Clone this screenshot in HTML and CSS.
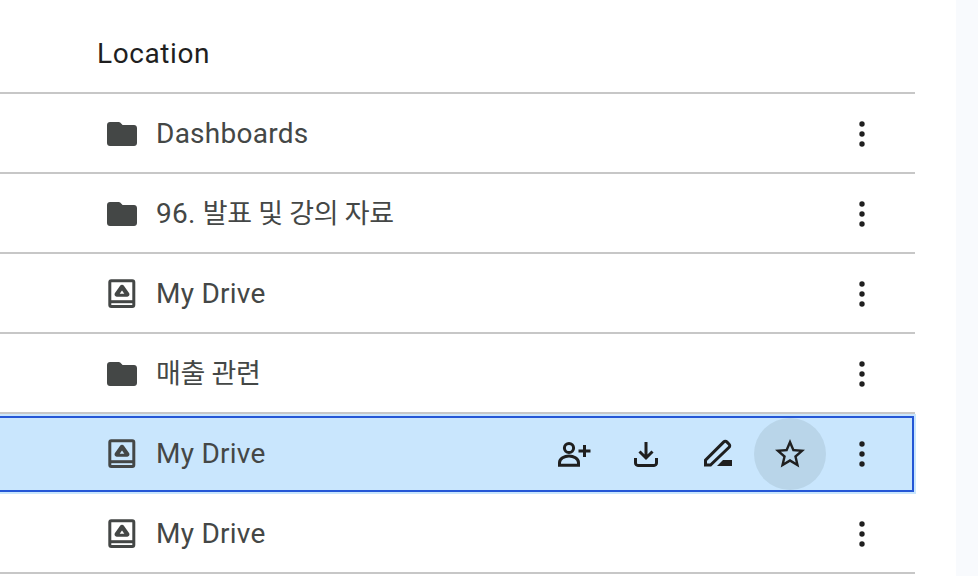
FILE: index.html
```html
<!DOCTYPE html>
<html lang="en">
  <head>
    <meta charset="UTF-8" />
    <title>Drive list</title>
    <link rel="stylesheet" href="styles.css">
  </head>
  <body>
    <svg class="defs" width="0" height="0">
      <symbol id="folder" viewBox="0 0 36 36">
        <path d="M6 6h8.700c.6 0 1.100.2 1.500.6L18.600 9H30c1.700 0 3 1.300 3 3v15c0 1.700-1.300 3-3 3H6c-1.700 0-3-1.300-3-3V9c0-1.700 1.300-3 3-3z" />
      </symbol>
      <symbol id="drive" viewBox="0 0 36 36">
        <rect class="line" x="5.800" y="4.800" width="24" height="25.700" rx="1.500" />
        <path class="line" d="M6 25.700h24" />
        <path d="M18 8.800c.8 0 1.500.4 1.900 1l5.300 7.500c.8 1.500-.2 3.400-1.900 3.400H12.700c-1.700 0-2.700-1.900-1.900-3.400l5.300-7.500c.4-.6 1.100-1 1.900-1z" />
        <path class="cut" d="M18 14.500l-2.300 3.300h4.600z" />
      </symbol>
      <symbol id="dots" viewBox="0 0 36 36">
        <circle cx="18" cy="8" r="2.700" />
        <circle cx="18" cy="18" r="2.700" />
        <circle cx="18" cy="28" r="2.700" />
      </symbol>
    </svg>

    <main class="list">
      <header class="list-head">Location</header>

      <div class="row">
        <svg class="item-icon"><use href="#folder" /></svg>
        <span class="name">Dashboards</span>
        <div class="actions">
          <button class="act"><svg><use href="#dots" /></svg></button>
        </div>
      </div>

      <div class="row">
        <svg class="item-icon"><use href="#folder" /></svg>
        <span class="name">96. <span class="ko">발표 및 강의 자료</span></span>
        <div class="actions">
          <button class="act"><svg><use href="#dots" /></svg></button>
        </div>
      </div>

      <div class="row">
        <svg class="item-icon"><use href="#drive" /></svg>
        <span class="name">My Drive</span>
        <div class="actions">
          <button class="act"><svg><use href="#dots" /></svg></button>
        </div>
      </div>

      <div class="row">
        <svg class="item-icon"><use href="#folder" /></svg>
        <span class="name"><span class="ko">매출 관련</span></span>
        <div class="actions">
          <button class="act"><svg><use href="#dots" /></svg></button>
        </div>
      </div>

      <div class="row selected">
        <svg class="item-icon"><use href="#drive" /></svg>
        <span class="name">My Drive</span>
        <div class="actions">
          <button class="act">
            <svg viewBox="0 0 36 36" class="stroked">
              <circle cx="13" cy="12" r="4.600" />
              <path d="M3.500 29.300v-2.600c0-4 5-6.700 9.500-6.700s9.500 2.700 9.500 6.700v2.600z" />
              <path d="M22.500 15h12M28.500 9v12" />
            </svg>
          </button>
          <button class="act">
            <svg viewBox="0 0 36 36" class="stroked">
              <path d="M18 6v16M11.500 15.500L18 22l6.500-6.500" />
              <path d="M7.500 22v5a2.400 2.400 0 0 0 2.400 2.400h16.200a2.400 2.400 0 0 0 2.400-2.400v-5" />
            </svg>
          </button>
          <button class="act">
            <svg viewBox="0 0 36 36" class="stroked">
              <path d="M5.500 29v-4.800L23.800 5.900a2.100 2.100 0 0 1 3 0l2.300 2.300a2.100 2.100 0 0 1 0 3L10.500 29z" />
              <path class="solid" d="M17 30l6-6h9v6z" />
            </svg>
          </button>
          <button class="act hovered">
            <svg viewBox="0 0 24 24" class="star">
              <path d="M22 9.240l-7.190-.62L12 2 9.190 8.630 2 9.240l5.460 4.730L5.820 21 12 17.270 18.180 21l-1.630-7.030L22 9.240zM12 15.400l-3.760 2.270 1-4.280-3.320-2.880 4.380-.38L12 6.100l1.710 4.040 4.380.38-3.320 2.880 1 4.280L12 15.400z" />
            </svg>
          </button>
          <button class="act"><svg><use href="#dots" /></svg></button>
        </div>
      </div>

      <div class="row">
        <svg class="item-icon"><use href="#drive" /></svg>
        <span class="name">My Drive</span>
        <div class="actions">
          <button class="act"><svg><use href="#dots" /></svg></button>
        </div>
      </div>
    </main>
  </body>
</html>
```

FILE: styles.css
```css
html,
body {
  height: 100%;
}
body {
  margin: 0;
  background-color: #f8fafd;
  font-family: Roboto, "Noto Sans CJK KR", sans-serif;
  overflow: hidden;
}
.defs {
  position: absolute;
}
.list {
  width: 956px;
  height: 100%;
  background-color: #fff;
  overflow: hidden;
}
.list-head,
.row {
  width: 923px;
  margin-left: -8px;
  box-sizing: border-box;
  border-bottom: 2px solid #c7c7c7;
}
.list-head {
  height: 94px;
  padding: 35px 0 0 105px;
  font-size: 28px;
  line-height: 38px;
  letter-spacing: 0.600px;
  color: #1f1f1f;
}
.row {
  --cut: #fff;
  height: 80px;
  display: flex;
  align-items: center;
  padding: 2px 17px 0 112px;
  color: #444746;
}
.item-icon {
  flex: none;
  width: 36px;
  height: 36px;
  fill: #444746;
}
#drive .line {
  fill: none;
  stroke: #444746;
  stroke-width: 3;
}
#drive .cut {
  fill: var(--cut);
}
.name {
  margin-left: 16px;
  font-size: 28px;
  line-height: 36px;
  letter-spacing: 0.250px;
}
.ko {
  font-size: 27px;
  letter-spacing: -0.300px;
}
.actions {
  margin-left: auto;
  display: flex;
}
.act {
  width: 72px;
  height: 72px;
  padding: 0;
  border: 0;
  border-radius: 50%;
  background: none;
  display: flex;
  align-items: center;
  justify-content: center;
}
.act svg {
  width: 36px;
  height: 36px;
  fill: #1f1f1f;
}
.act .stroked {
  fill: none;
  stroke: #1f1f1f;
  stroke-width: 3;
}
.act .stroked .solid {
  fill: #1f1f1f;
  stroke: none;
}
.row.selected {
  --cut: #c9e6fd;
  width: 924px;
  padding-right: 18px;
  background-color: #c9e6fd;
  border-bottom-color: #c9e6fd;
  outline: 2px solid #2456d6;
  outline-offset: -4px;
}
.hovered {
  background-color: #b9d5e9;
}
```
